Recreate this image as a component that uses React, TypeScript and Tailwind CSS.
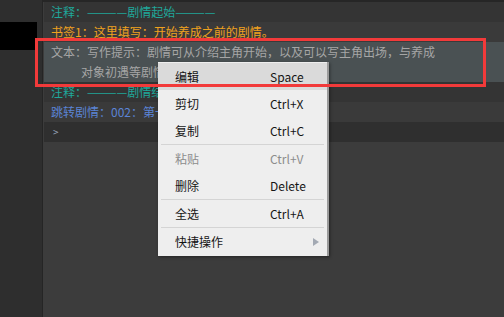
import React from "react";

const font = { fontFamily: '"Noto Sans CJK SC", "Noto Sans", sans-serif' };

function Row({ bg, color, children, h = "h-[20px]" }: { bg: string; color: string; children: React.ReactNode; h?: string }) {
  return (
    <div className={`${h} ${bg} ${color} pl-[7px] text-[12px] leading-[20px] whitespace-nowrap overflow-hidden`}>
      {children}
    </div>
  );
}

function Item({ label, shortcut, disabled, active, arrow }: { label: string; shortcut?: string; disabled?: boolean; active?: boolean; arrow?: boolean }) {
  return (
    <div className={`h-[27px] flex items-center text-[12px] ${active ? "bg-[#dadada]" : ""} ${disabled ? "text-[#8c8c8c]" : "text-[#151515]"}`}>
      <div className="w-[112px] pl-[17px]">{label}</div>
      <div className="flex-1">{shortcut}</div>
      {arrow && (
        <svg width="6" height="8" viewBox="0 0 6 8" className="mr-[8px]">
          <path d="M0 0 L6 4 L0 8 Z" fill="#a3a9b3" />
        </svg>
      )}
    </div>
  );
}

function Sep() {
  return <div className="h-px mx-[3px] bg-[#d4d4d4]" />;
}

export default function App() {
  return (
    <div className="relative w-[504px] h-[317px] bg-[#3c3c3c] flex overflow-hidden" style={font}>
      <div className="w-[43px] h-full bg-[#2e2e2e] border-r border-[#252525] shrink-0">
        <div className="h-[22px]" />
        <div className="w-[37px] h-[28px] bg-black" />
      </div>
      <div className="flex-1 flex flex-col">
        <div className="h-[2px] bg-[#262626]" />
        <div className="ml-[1px] flex flex-col">
          <Row bg="bg-[#343434]" color="text-[#1fa89b]">注释：————剧情起始————</Row>
          <Row bg="bg-[#3a3a3a]" color="text-[#f0a21e]">书签1：这里填写：开始养成之前的剧情。</Row>
          <div className="h-[40px] bg-[#4a5153] text-[#a6a6a6] pl-[7px] text-[12px] leading-[20px] whitespace-nowrap overflow-hidden">
            <div>文本：写作提示：剧情可从介绍主角开始，以及可以写主角出场，与养成</div>
            <div className="pl-[30px]">对象初遇等剧情。</div>
          </div>
          <Row bg="bg-[#343434]" color="text-[#1fa89b]">注释：————剧情结束————</Row>
          <Row bg="bg-[#3a3a3a]" color="text-[#5b84d6]">跳转剧情：002：第一章</Row>
          <div className="h-[20px] bg-[#2f2f2f] pl-[9px] text-[10px] leading-[20px] text-[#9aa6bc]">&gt;</div>
        </div>
      </div>

      <div className="absolute left-[158px] top-[62px] w-[171px] bg-[#eeeeee] border-r-2 border-[#9a9a9a] py-[1px] shadow-[1px_1px_3px_rgba(0,0,0,0.4)]">
        <Item label="编辑" shortcut="Space" active />
        <Item label="剪切" shortcut="Ctrl+X" />
        <Item label="复制" shortcut="Ctrl+C" />
        <Sep />
        <Item label="粘贴" shortcut="Ctrl+V" disabled />
        <Item label="删除" shortcut="Delete" />
        <Sep />
        <Item label="全选" shortcut="Ctrl+A" />
        <Sep />
        <Item label="快捷操作" arrow />
      </div>

      <div className="absolute left-[35px] top-[38px] w-[451px] h-[49px] border-[3px] border-[#f23a3a] pointer-events-none" />
    </div>
  );
}
